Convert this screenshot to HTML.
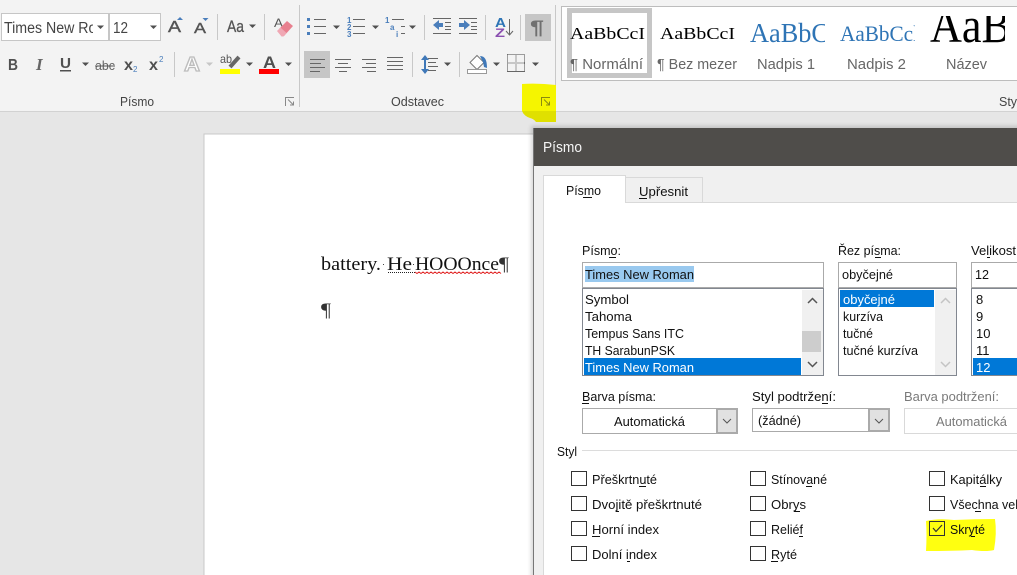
<!DOCTYPE html>
<html><head><meta charset="utf-8"><title>Písmo</title>
<style>
html,body{margin:0;padding:0;background:#e6e6e6;width:1017px;height:575px;overflow:hidden}
svg{display:block;position:absolute;left:0;top:0}
text{font-family:"Liberation Sans",sans-serif;white-space:pre}
.s{font-family:"Liberation Serif",serif}
.d{font-size:13px;fill:#111}
.l{font-size:14.5px;fill:#666}
</style></head><body>
<svg width="1017" height="575" viewBox="0 0 1017 575" xmlns="http://www.w3.org/2000/svg">
<defs>
<clipPath id="c1"><rect x="3" y="14" width="90" height="26"/></clipPath>
<clipPath id="c3"><rect x="840" y="7" width="75" height="72"/></clipPath>
<clipPath id="c4"><rect x="925" y="16" width="80" height="60"/></clipPath>
<clipPath id="c5"><rect x="750" y="7" width="75" height="72"/></clipPath>
<filter id="b" x="-5%" y="-5%" width="110%" height="110%"><feGaussianBlur stdDeviation="2"/></filter>
</defs>
<!-- backgrounds -->
<rect width="1017" height="575" fill="#e6e6e6"/>
<rect width="1017" height="111" fill="#f3f3f3"/>
<rect y="111" width="1017" height="1" fill="#d2d2d2"/>
<!-- document page -->
<rect x="204" y="134" width="830" height="460" fill="#fff" stroke="#c8c8c8" stroke-width="1"/>
<text class="s" x="321" y="270" font-size="19" fill="#111" textLength="60" lengthAdjust="spacingAndGlyphs">battery.</text>
<rect x="383" y="264" width="1" height="1" fill="#444"/>
<text class="s" x="387" y="270" font-size="19" fill="#111" textLength="25" lengthAdjust="spacingAndGlyphs">He</text>
<rect x="413" y="264" width="1" height="1" fill="#444"/>
<text class="s" x="415" y="270" font-size="19" fill="#111" textLength="84" lengthAdjust="spacingAndGlyphs">HOOOnce</text>
<text class="s" x="499" y="270" font-size="19" fill="#333" textLength="10" lengthAdjust="spacingAndGlyphs">¶</text>
<path d="M388 272.500H415" stroke="#222" stroke-width="1" stroke-dasharray="1 1"/>
<path d="M415 272l2 1.500 2-1.500 2 1.500 2-1.500 2 1.500 2-1.500 2 1.500 2-1.500 2 1.500 2-1.500 2 1.500 2-1.500 2 1.500 2-1.500 2 1.500 2-1.500 2 1.500 2-1.500 2 1.500 2-1.500 2 1.500 2-1.500 2 1.500 2-1.500 2 1.500 2-1.500 2 1.500 2-1.500 2 1.500 2-1.500 2 1.500 2-1.500 2 1.500 2-1.500 2 1.500 2-1.500 2 1.500 2-1.500 2 1.500 2-1.500 2 1.500 2-1.500 2 1.500" fill="none" stroke="#e02020" stroke-width="1"/>
<text class="s" x="321" y="316" font-size="19" fill="#333" textLength="10" lengthAdjust="spacingAndGlyphs">¶</text>

<!-- font group -->
<rect x="1.500" y="13.500" width="107" height="27" fill="#fff" stroke="#c6c6c6"/>
<rect x="109.500" y="13.500" width="51" height="27" fill="#fff" stroke="#c6c6c6"/>
<text clip-path="url(#c1)" x="4" y="33" font-size="15.500" fill="#444" textLength="120" lengthAdjust="spacingAndGlyphs">Times New Roman</text>
<text x="113" y="33" font-size="15.500" fill="#444" textLength="15" lengthAdjust="spacingAndGlyphs">12</text>
<path d="M97 25.500h7l-3.500 3.500zM150 25.500h7l-3.500 3.500zM249 24.500h7l-3.500 3.500zM82 62.500h7l-3.500 3.500zM246 62.500h7l-3.500 3.500zM285 62.500h7l-3.500 3.500zM333 25.500h7l-3.500 3.500zM372 25.500h7l-3.500 3.500zM409 25.500h7l-3.500 3.500zM444 62.500h7l-3.500 3.500zM493 62.500h7l-3.500 3.500zM532 62.500h7l-3.500 3.500z" fill="#505050"/>
<path d="M206 62.500h7l-3.500 3.500z" fill="#c6c6c6"/>
<text x="168" y="32" font-size="16" fill="#555" stroke="#555" stroke-width=".4" textLength="13" lengthAdjust="spacingAndGlyphs">A</text>
<path d="M177 20l3-3 3 3z" fill="#4a7ebb"/>
<text x="194" y="33" font-size="15" fill="#555" stroke="#555" stroke-width=".4" textLength="12" lengthAdjust="spacingAndGlyphs">A</text>
<path d="M202.500 18h6l-3 3z" fill="#4a7ebb"/>
<path d="M217.500 14v26M264.500 14v26M174.500 52v25M424.500 15v25M485.500 15v25M520.500 15v25M412.500 52v25M459.500 52v25M299.500 5v102M555.500 5v102" stroke="#c8c8c8"/>
<text x="227" y="32" font-size="16.500" fill="#555" stroke="#555" stroke-width=".3" textLength="17" lengthAdjust="spacingAndGlyphs">Aa</text>
<text x="274" y="27" font-size="12" fill="#555" textLength="9" lengthAdjust="spacingAndGlyphs">A</text>
<path d="M279 29l8-8 6 5-9 10z" fill="#e8808f"/>
<path d="M277 31l3.500-3.500 6 5.500-3 3.500h-2z" fill="#f0a8b4"/>
<text x="8" y="70" font-size="16" font-weight="bold" fill="#505050" textLength="10" lengthAdjust="spacingAndGlyphs">B</text>
<text class="s" x="36" y="70" font-size="17" font-weight="bold" font-style="italic" fill="#666">I</text>
<text x="60" y="68" font-size="15" font-weight="bold" fill="#505050" textLength="11" lengthAdjust="spacingAndGlyphs">U</text>
<rect x="60" y="70" width="11" height="1.500" fill="#505050"/>
<text x="95" y="70" font-size="13" fill="#666" textLength="20" lengthAdjust="spacingAndGlyphs">abc</text>
<rect x="95" y="65.500" width="20" height="1" fill="#555"/>
<text x="124" y="70" font-size="16" font-weight="bold" fill="#505050" textLength="9" lengthAdjust="spacingAndGlyphs">x</text>
<text x="133" y="72" font-size="8" fill="#4a7ebb">2</text>
<text x="149" y="70" font-size="16" font-weight="bold" fill="#505050" textLength="9" lengthAdjust="spacingAndGlyphs">x</text>
<text x="159" y="62" font-size="8" fill="#4a7ebb">2</text>
<text x="184" y="71" font-size="20" fill="#fff" stroke="#bdbdbd" stroke-width="1.300" font-weight="bold" textLength="16" lengthAdjust="spacingAndGlyphs">A</text>
<text x="220" y="63" font-size="12" fill="#555" textLength="12" lengthAdjust="spacingAndGlyphs">ab</text>
<path d="M230 67l9-10" stroke="#666" stroke-width="4"/>
<rect x="220" y="69" width="20" height="5" fill="#ffff00"/>
<text x="263" y="68" font-size="17" font-weight="bold" fill="#505050" textLength="13" lengthAdjust="spacingAndGlyphs">A</text>
<rect x="259" y="69" width="20" height="5" fill="#f00"/>
<text x="120" y="106" font-size="12.500" fill="#444" textLength="34" lengthAdjust="spacingAndGlyphs">Písmo</text>
<path d="M294 97.500H285.500V106M288 99.500l5 5M290 105h3.500v-3.500" fill="none" stroke="#888"/>

<!-- paragraph group -->
<g fill="#4a7ebb"><rect x="307" y="18" width="3" height="3"/><rect x="307" y="25" width="3" height="3"/><rect x="307" y="32" width="3" height="3"/></g>
<path d="M314 19.500h12M314 26.500h12M314 33.500h12M353 19.500h12M353 26.500h12M353 33.500h12M392 19.500h12M401 26.500h4M401 33.500h4" stroke="#666" stroke-width="1"/>
<g font-size="8" fill="#4a7ebb" font-weight="bold"><text x="347" y="23">1</text><text x="347" y="30">2</text><text x="347" y="37">3</text><text x="385" y="23">1</text><text x="390" y="30">a</text><text x="396" y="37">i</text></g>
<rect x="304" y="51" width="26" height="27" fill="#c6c6c6"/>
<path d="M310 59.500h15M310 63.500h11M310 67.500h15M310 71.500h10" stroke="#666" fill="none"/>
<path d="M335 59.500h16M338 63.500h10M335 67.500h16M339 71.500h8M362 59.500h14M366 63.500h10M362 67.500h14M367 71.500h9M387 57.500h16M387 61.500h16M387 65.500h16M387 69.500h16" stroke="#666" fill="none"/>
<path d="M433 25l6-5v3h4v4h-4v3zM459 23h5v-3l6 5-6 5v-3h-5z" fill="#4a7ebb"/>
<path d="M433 18.500h18M445 22.500h6M445 26.500h6M445 29.500h6M433 33.500h18M459 18.500h18M471 22.500h6M471 26.500h6M471 29.500h6M459 33.500h18" stroke="#666" fill="none"/>
<text x="495" y="27" font-size="13" font-weight="bold" fill="#2e75b6" textLength="11" lengthAdjust="spacingAndGlyphs">A</text>
<text x="495" y="37" font-size="12" font-weight="bold" fill="#8a4fb0" textLength="10" lengthAdjust="spacingAndGlyphs">Z</text>
<path d="M509.500 19v16M506 31l3.500 4 3.500-4" stroke="#666" fill="none"/>
<rect x="525" y="14" width="26" height="27" fill="#c6c6c6"/>
<text x="530" y="34" font-size="19" font-weight="bold" fill="#707070" textLength="14" lengthAdjust="spacingAndGlyphs">¶</text>
<path d="M421 60l4-5 4 5zM421 69l4 5 4-5z" fill="#3f78b8"/><path d="M425 59v11" stroke="#3f78b8" stroke-width="2"/>
<path d="M428 58.500h10M428 62.500h8M428 66.500h10M428 70.500h8" stroke="#666" fill="none"/>
<path d="M477 55.500l7 7-7 7-7-7z" fill="#fff" stroke="#777"/><path d="M480 56c5 0 7 4 7 12l-3-1-1-5z" fill="#3f78b8"/>
<rect x="467.500" y="69.500" width="19" height="4" fill="#fff" stroke="#999"/>
<path d="M507.500 54.500h17v17M507.500 54.500v17M516 54.500v17M507.500 63h17" fill="none" stroke="#444" stroke-dasharray="1 1"/>
<path d="M507 71.500h18" stroke="#666"/>
<text x="391" y="106" font-size="12.500" fill="#444" textLength="53" lengthAdjust="spacingAndGlyphs">Odstavec</text>

<!-- yellow highlight -->
<path d="M522 84q16-1 34 1V111H522z" fill="#f5f500"/>
<path d="M522 111H556V122H536q-2-3-6-4-6-2-8-7z" fill="#e0e000"/>
<path d="M550 97.500H541.500V106M544 99.500l5 5M546 105h3.500v-3.500" fill="none" stroke="#8a8a10"/>

<!-- styles gallery -->
<rect x="561.500" y="6.500" width="480" height="74" fill="#fff" stroke="#bdbdbd"/>
<rect x="569.500" y="10.500" width="80" height="65" fill="#fff" stroke="#c6c6c6" stroke-width="5"/>
<text class="s" x="570" y="39" font-size="17" fill="#000" textLength="75" lengthAdjust="spacingAndGlyphs">AaBbCcI</text>
<text class="s" x="660" y="39" font-size="17" fill="#000" textLength="75" lengthAdjust="spacingAndGlyphs">AaBbCcI</text>
<text class="s" clip-path="url(#c5)" x="750" y="42" font-size="27" fill="#2e74b5" textLength="79" lengthAdjust="spacingAndGlyphs">AaBbC</text>
<text class="s" clip-path="url(#c3)" x="840" y="41" font-size="22" fill="#2e74b5" textLength="79" lengthAdjust="spacingAndGlyphs">AaBbCcl</text>
<text class="s" clip-path="url(#c4)" x="930" y="42" font-size="50" fill="#000" textLength="81" lengthAdjust="spacingAndGlyphs">AaB</text>
<text class="l" x="570" y="69" textLength="73" lengthAdjust="spacingAndGlyphs">¶ Normální</text>
<text class="l" x="657" y="69" textLength="80" lengthAdjust="spacingAndGlyphs">¶ Bez mezer</text>
<text class="l" x="757" y="69" textLength="58" lengthAdjust="spacingAndGlyphs">Nadpis 1</text>
<text class="l" x="847" y="69" textLength="59" lengthAdjust="spacingAndGlyphs">Nadpis 2</text>
<text class="l" x="946" y="69" textLength="41" lengthAdjust="spacingAndGlyphs">Název</text>
<text x="999" y="106" font-size="12.500" fill="#444">Sty</text>

<!-- dialog -->
<rect x="531" y="126" width="520" height="470" fill="#000" opacity=".16" filter="url(#b)"/>
<rect x="533" y="128" width="500" height="460" fill="#f0f0f0"/>
<rect x="533" y="128" width="1" height="450" fill="#777"/>
<rect x="534" y="128" width="483" height="38" fill="#4f4d4a"/>
<text x="543" y="152" font-size="14.500" fill="#f5f5f5" textLength="39" lengthAdjust="spacingAndGlyphs">Písmo</text>
<rect x="543.500" y="202.500" width="500" height="400" fill="#fff" stroke="#d9d9d9"/>
<rect x="625.500" y="177.500" width="77" height="25" fill="#f0f0f0" stroke="#d9d9d9"/>
<path d="M543.500 203V175.500H625.500V203" fill="#fff" stroke="#d9d9d9"/>
<rect x="544" y="200" width="81" height="5" fill="#fff"/>
<text class="d" x="566" y="195" textLength="35" lengthAdjust="spacingAndGlyphs">Písmo</text><rect x="583" y="197" width="9" height="1" fill="#111"/>
<text class="d" x="639" y="196" textLength="49" lengthAdjust="spacingAndGlyphs">Upřesnit</text><rect x="639" y="198" width="8" height="1" fill="#111"/>

<text class="d" x="582" y="255" textLength="39" lengthAdjust="spacingAndGlyphs">Písmo:</text><rect x="609" y="257" width="7" height="1" fill="#111"/>
<rect x="582.500" y="262.500" width="241" height="25" fill="#fff" stroke="#aaa"/>
<rect x="585" y="266" width="109" height="16" fill="#99c9ef"/>
<text class="d" x="585" y="279" textLength="109" lengthAdjust="spacingAndGlyphs">Times New Roman</text>
<rect x="582.500" y="288.500" width="241" height="87" fill="#fff" stroke="#828790"/>
<rect x="584" y="358" width="217" height="17" fill="#0078d7"/>
<text class="d" x="585" y="304" textLength="44" lengthAdjust="spacingAndGlyphs">Symbol</text>
<text class="d" x="585" y="321" textLength="47" lengthAdjust="spacingAndGlyphs">Tahoma</text>
<text class="d" x="585" y="338" textLength="99" lengthAdjust="spacingAndGlyphs">Tempus Sans ITC</text>
<text class="d" x="585" y="355" textLength="90" lengthAdjust="spacingAndGlyphs">TH SarabunPSK</text>
<text class="d" x="585" y="372" textLength="109" lengthAdjust="spacingAndGlyphs" style="fill:#fff">Times New Roman</text>
<rect x="802" y="290" width="21" height="85" fill="#f0f0f0"/>
<rect x="802" y="331" width="19" height="21" fill="#cdcdcd"/>
<path d="M808 303l4.500-4.500 4.500 4.500M808 362l4.500 4.500 4.500-4.500" fill="none" stroke="#555" stroke-width="1.500"/>

<text class="d" x="838" y="255" textLength="63" lengthAdjust="spacingAndGlyphs">Řez písma:</text><rect x="875" y="257" width="6" height="1" fill="#111"/>
<rect x="838.500" y="262.500" width="118" height="25" fill="#fff" stroke="#aaa"/>
<text class="d" x="842" y="279" textLength="51" lengthAdjust="spacingAndGlyphs">obyčejné</text>
<rect x="838.500" y="288.500" width="118" height="87" fill="#fff" stroke="#828790"/>
<rect x="840" y="290" width="94" height="17" fill="#0078d7"/>
<text class="d" x="843" y="304" textLength="52" lengthAdjust="spacingAndGlyphs" style="fill:#fff">obyčejné</text>
<text class="d" x="843" y="321" textLength="40" lengthAdjust="spacingAndGlyphs">kurzíva</text>
<text class="d" x="843" y="338" textLength="30" lengthAdjust="spacingAndGlyphs">tučné</text>
<text class="d" x="843" y="355" textLength="75" lengthAdjust="spacingAndGlyphs">tučné kurzíva</text>
<rect x="935" y="290" width="21" height="85" fill="#f0f0f0"/>
<path d="M941 303l4.500-4.500 4.500 4.500M941 362l4.500 4.500 4.500-4.500" fill="none" stroke="#c4c4c4" stroke-width="1.500"/>

<text class="d" x="971" y="255" textLength="45" lengthAdjust="spacingAndGlyphs">Velikost</text><rect x="987" y="257" width="3" height="1" fill="#111"/>
<rect x="971.500" y="262.500" width="80" height="25" fill="#fff" stroke="#aaa"/>
<text class="d" x="975" y="279" textLength="14" lengthAdjust="spacingAndGlyphs">12</text>
<rect x="971.500" y="288.500" width="80" height="87" fill="#fff" stroke="#828790"/>
<rect x="973" y="358" width="44" height="17" fill="#0078d7"/>
<text class="d" x="976" y="304">8</text><text class="d" x="976" y="321">9</text><text class="d" x="976" y="338">10</text><text class="d" x="976" y="355">11</text><text class="d" x="976" y="372" style="fill:#fff">12</text>

<text class="d" x="582" y="401" textLength="74" lengthAdjust="spacingAndGlyphs">Barva písma:</text><rect x="582" y="403" width="7" height="1" fill="#111"/>
<rect x="582.500" y="408.500" width="155" height="25" fill="#fff" stroke="#aaa"/>
<rect x="717" y="409" width="20" height="24" fill="#e1e1e1" stroke="#aaa" stroke-width="2"/>
<path d="M723 419l4 4 4-4" fill="none" stroke="#555"/>
<text class="d" x="614" y="426" textLength="71" lengthAdjust="spacingAndGlyphs">Automatická</text>
<text class="d" x="752" y="401" textLength="84" lengthAdjust="spacingAndGlyphs">Styl podtržení:</text><rect x="822" y="403" width="6" height="1" fill="#111"/>
<rect x="752.500" y="408.500" width="137" height="23" fill="#fff" stroke="#aaa"/>
<rect x="869" y="409" width="20" height="22" fill="#e1e1e1" stroke="#aaa" stroke-width="2"/>
<path d="M875 419l4 4 4-4" fill="none" stroke="#555"/>
<text class="d" x="758" y="425" textLength="43" lengthAdjust="spacingAndGlyphs">(žádné)</text>
<text class="d" x="904" y="401" textLength="95" lengthAdjust="spacingAndGlyphs" style="fill:#7a7a7a">Barva podtržení:</text>
<rect x="904.500" y="408.500" width="140" height="25" fill="#fff" stroke="#d9d9d9"/>
<text class="d" x="936" y="426" textLength="71" lengthAdjust="spacingAndGlyphs" style="fill:#7a7a7a">Automatická</text>

<text class="d" x="557" y="456" textLength="20" lengthAdjust="spacingAndGlyphs">Styl</text>
<rect x="582" y="450" width="440" height="1" fill="#dcdcdc"/>

<path d="M926 521q12-3 28-1 22-1 41-1 2 14-1 31-8 2-22 0-20 1-46 1 1-16 0-30z" fill="#ffff10"/>
<g fill="none" stroke="#333">
<rect x="571.500" y="471.500" width="15" height="14"/><rect x="571.500" y="496.500" width="15" height="14"/><rect x="571.500" y="521.500" width="15" height="14"/><rect x="571.500" y="546.500" width="15" height="14"/>
<rect x="750.500" y="471.500" width="15" height="14"/><rect x="750.500" y="496.500" width="15" height="14"/><rect x="750.500" y="521.500" width="15" height="14"/><rect x="750.500" y="546.500" width="15" height="14"/>
<rect x="929.500" y="471.500" width="15" height="14"/><rect x="929.500" y="496.500" width="15" height="14"/><rect x="929.500" y="521.500" width="15" height="14"/>
<path d="M933 528l3 3.500 6-6.500" stroke-width="1.200"/>
</g>
<text class="d" x="592" y="484" textLength="65" lengthAdjust="spacingAndGlyphs">Přeškrtnuté</text><rect x="639" y="486" width="7" height="1" fill="#111"/>
<text class="d" x="592" y="509" textLength="110" lengthAdjust="spacingAndGlyphs">Dvojitě přeškrtnuté</text><rect x="616" y="511" width="3" height="1" fill="#111"/>
<text class="d" x="592" y="534" textLength="67" lengthAdjust="spacingAndGlyphs">Horní index</text><rect x="592" y="536" width="8" height="1" fill="#111"/>
<text class="d" x="592" y="559" textLength="65" lengthAdjust="spacingAndGlyphs">Dolní index</text><rect x="627" y="561" width="3" height="1" fill="#111"/>
<text class="d" x="771" y="484" textLength="56" lengthAdjust="spacingAndGlyphs">Stínované</text><rect x="806" y="486" width="6" height="1" fill="#111"/>
<text class="d" x="771" y="509" textLength="35" lengthAdjust="spacingAndGlyphs">Obrys</text><rect x="794" y="511" width="6" height="1" fill="#111"/>
<text class="d" x="771" y="534" textLength="32" lengthAdjust="spacingAndGlyphs">Reliéf</text><rect x="799" y="536" width="4" height="1" fill="#111"/>
<text class="d" x="771" y="559" textLength="26" lengthAdjust="spacingAndGlyphs">Ryté</text><rect x="771" y="561" width="7" height="1" fill="#111"/>
<text class="d" x="950" y="484" textLength="52" lengthAdjust="spacingAndGlyphs">Kapitálky</text><rect x="980" y="486" width="6" height="1" fill="#111"/>
<text class="d" x="950" y="509" textLength="68" lengthAdjust="spacingAndGlyphs">Všechna vel</text><rect x="975" y="511" width="6" height="1" fill="#111"/>
<text class="d" x="950" y="534" textLength="35" lengthAdjust="spacingAndGlyphs">Skryté</text><rect x="971" y="536" width="4" height="1" fill="#111"/>
</svg>
</body></html>
